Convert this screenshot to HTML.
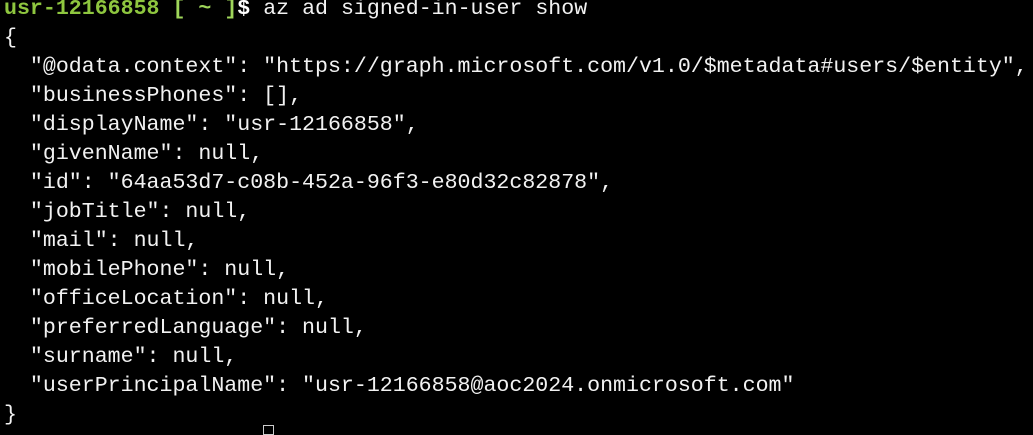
<!DOCTYPE html>
<html><head><meta charset="utf-8"><style>
html,body{margin:0;padding:0;background:#000;width:1033px;height:430px;overflow:hidden}
pre{margin:0;position:absolute;left:4px;top:-5px;font-family:"Liberation Mono",monospace;font-size:21.6px;line-height:29px;color:#f2f2f2}
.u{color:#8ec63f;font-weight:bold}.b{color:#9fd65a;font-weight:bold}.d{color:#fff;font-weight:bold}
.cur{position:absolute;left:263px;top:425px;width:11px;height:10px;border:1px solid #ccc;box-sizing:border-box}
</style></head><body>
<pre><span class="u">usr-12166858</span> <span class="b">[ ~ ]</span><span class="d">$</span> az ad signed-in-user show
{
  "@odata.context": "https://graph.microsoft.com/v1.0/$metadata#users/$entity",
  "businessPhones": [],
  "displayName": "usr-12166858",
  "givenName": null,
  "id": "64aa53d7-c08b-452a-96f3-e80d32c82878",
  "jobTitle": null,
  "mail": null,
  "mobilePhone": null,
  "officeLocation": null,
  "preferredLanguage": null,
  "surname": null,
  "userPrincipalName": "usr-12166858@aoc2024.onmicrosoft.com"
}</pre>
<div class="cur"></div>
</body></html>
